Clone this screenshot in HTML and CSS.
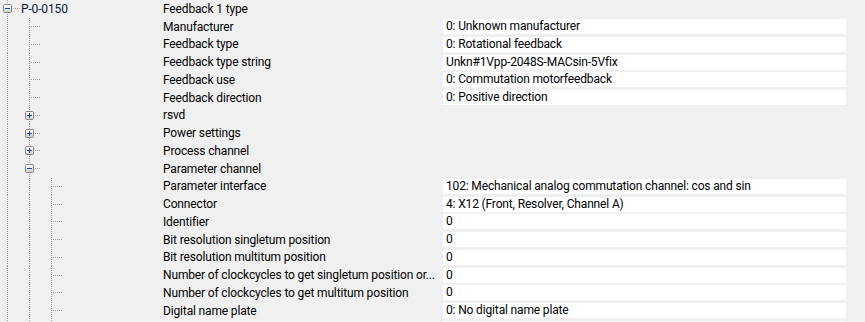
FILE: index.html
```html
<!DOCTYPE html>
<html>
<head>
<meta charset="utf-8">
<link rel="stylesheet" href="styles.css">
</head>
<body>
<div class="grid">
  <div class="row">
    <div class="tree">
      <span class="cell own top">
        <svg class="exp" viewBox="0 0 9 9" width="9" height="9"><rect x="0.5" y="0.5" width="8" height="8" rx="1" fill="url(#g)" stroke="#858585"/><path d="M2 4.5h5" stroke="#24468f"/><defs><linearGradient id="g" x1="0" y1="0" x2="0" y2="1"><stop offset="0" stop-color="#fff"/><stop offset="1" stop-color="#cfcfcf"/></linearGradient></defs></svg>
      </span>
      <span class="node">P-0-0150</span>
    </div>
    <div class="name">Feedback 1 type</div>
  </div>

  <div class="row">
    <div class="tree"><span class="cell vline"></span><span class="cell own"></span></div>
    <div class="name">Manufacturer</div>
    <div class="value">0: Unknown manufacturer</div>
  </div>
  <div class="row">
    <div class="tree"><span class="cell vline"></span><span class="cell own"></span></div>
    <div class="name">Feedback type</div>
    <div class="value">0: Rotational feedback</div>
  </div>
  <div class="row">
    <div class="tree"><span class="cell vline"></span><span class="cell own"></span></div>
    <div class="name">Feedback type string</div>
    <div class="value">Unkn#1Vpp-2048S-MACsin-5Vfix</div>
  </div>
  <div class="row">
    <div class="tree"><span class="cell vline"></span><span class="cell own"></span></div>
    <div class="name">Feedback use</div>
    <div class="value">0: Commutation motorfeedback</div>
  </div>
  <div class="row">
    <div class="tree"><span class="cell vline"></span><span class="cell own"></span></div>
    <div class="name">Feedback direction</div>
    <div class="value">0: Positive direction</div>
  </div>

  <div class="row">
    <div class="tree"><span class="cell vline"></span><span class="cell own">
      <svg class="exp" viewBox="0 0 9 9" width="9" height="9"><rect x="0.5" y="0.5" width="8" height="8" rx="1" fill="url(#g)" stroke="#858585"/><path d="M2 4.5h5M4.5 2v5" stroke="#24468f"/></svg>
    </span></div>
    <div class="name">rsvd</div>
  </div>
  <div class="row">
    <div class="tree"><span class="cell vline"></span><span class="cell own">
      <svg class="exp" viewBox="0 0 9 9" width="9" height="9"><rect x="0.5" y="0.5" width="8" height="8" rx="1" fill="url(#g)" stroke="#858585"/><path d="M2 4.5h5M4.5 2v5" stroke="#24468f"/></svg>
    </span></div>
    <div class="name">Power settings</div>
  </div>
  <div class="row">
    <div class="tree"><span class="cell vline"></span><span class="cell own">
      <svg class="exp" viewBox="0 0 9 9" width="9" height="9"><rect x="0.5" y="0.5" width="8" height="8" rx="1" fill="url(#g)" stroke="#858585"/><path d="M2 4.5h5M4.5 2v5" stroke="#24468f"/></svg>
    </span></div>
    <div class="name">Process channel</div>
  </div>
  <div class="row">
    <div class="tree"><span class="cell vline"></span><span class="cell own">
      <svg class="exp" viewBox="0 0 9 9" width="9" height="9"><rect x="0.5" y="0.5" width="8" height="8" rx="1" fill="url(#g)" stroke="#858585"/><path d="M2 4.5h5" stroke="#24468f"/></svg>
    </span></div>
    <div class="name">Parameter channel</div>
  </div>

  <div class="row">
    <div class="tree"><span class="cell vline"></span><span class="cell vline"></span><span class="cell own"></span></div>
    <div class="name">Parameter interface</div>
    <div class="value">102: Mechanical analog commutation channel: cos and sin</div>
  </div>
  <div class="row">
    <div class="tree"><span class="cell vline"></span><span class="cell vline"></span><span class="cell own"></span></div>
    <div class="name">Connector</div>
    <div class="value">4: X12 (Front, Resolver, Channel A)</div>
  </div>
  <div class="row">
    <div class="tree"><span class="cell vline"></span><span class="cell vline"></span><span class="cell own"></span></div>
    <div class="name">Identifier</div>
    <div class="value">0</div>
  </div>
  <div class="row">
    <div class="tree"><span class="cell vline"></span><span class="cell vline"></span><span class="cell own"></span></div>
    <div class="name">Bit resolution singletum position</div>
    <div class="value">0</div>
  </div>
  <div class="row">
    <div class="tree"><span class="cell vline"></span><span class="cell vline"></span><span class="cell own"></span></div>
    <div class="name">Bit resolution multitum position</div>
    <div class="value">0</div>
  </div>
  <div class="row">
    <div class="tree"><span class="cell vline"></span><span class="cell vline"></span><span class="cell own"></span></div>
    <div class="name">Number of clockcycles to get singletum position or...</div>
    <div class="value">0</div>
  </div>
  <div class="row">
    <div class="tree"><span class="cell vline"></span><span class="cell vline"></span><span class="cell own"></span></div>
    <div class="name">Number of clockcycles to get multitum position</div>
    <div class="value">0</div>
  </div>
  <div class="row">
    <div class="tree"><span class="cell vline"></span><span class="cell vline"></span><span class="cell own"></span></div>
    <div class="name">Digital name plate</div>
    <div class="value">0: No digital name plate</div>
  </div>
  <div class="row">
    <div class="tree"><span class="cell vline"></span><span class="cell vline"></span><span class="cell own"></span></div>
    <div class="name"></div>
    <div class="value"></div>
  </div>
</div>
</body>
</html>
```

FILE: styles.css
```css
html, body {
  margin: 0;
  padding: 0;
  background: #f0f0f0;
  overflow: hidden;
}

body {
  font-family: Roboto, "Noto Sans", sans-serif;
  font-size: 12px;
  letter-spacing: -0.15px;
  color: #000;
}

.grid {
  display: flex;
  flex-direction: column;
}

.row {
  display: flex;
  align-items: center;
  height: 17.76px;
  flex: none;
}

.tree {
  width: 163px;
  height: 100%;
  display: flex;
  align-items: center;
  flex: none;
}

.cell {
  width: 22px;
  height: 100%;
  flex: none;
  display: flex;
  align-items: center;
}

.vline {
  background: repeating-linear-gradient(to bottom, #a0a0a0 0 1px, transparent 1px 2px) 7px 0 / 1px 100% no-repeat;
}

.own {
  background:
    repeating-linear-gradient(to bottom, #a0a0a0 0 1px, transparent 1px 2px) 7px 0 / 1px 100% no-repeat,
    repeating-linear-gradient(to right, #a0a0a0 0 1px, transparent 1px 2px) 9px 50% / 9px 1px no-repeat;
}

.own.top {
  width: 21px;
  background:
    repeating-linear-gradient(to bottom, #a0a0a0 0 1px, transparent 1px 2px) 7px 0 / 1px 100% no-repeat,
    repeating-linear-gradient(to right, #a0a0a0 0 1px, transparent 1px 2px) 13px 50% / 7px 1px no-repeat;
}

.exp {
  display: block;
  margin-left: 3px;
}

.node {
  white-space: nowrap;
  color: #0a1633;
}

.name {
  width: 280px;
  flex: none;
  white-space: nowrap;
  overflow: hidden;
}

.value {
  width: 400px;
  height: 15px;
  line-height: 15px;
  flex: none;
  background: #fff;
  padding-left: 3px;
  white-space: nowrap;
  overflow: hidden;
}
```
